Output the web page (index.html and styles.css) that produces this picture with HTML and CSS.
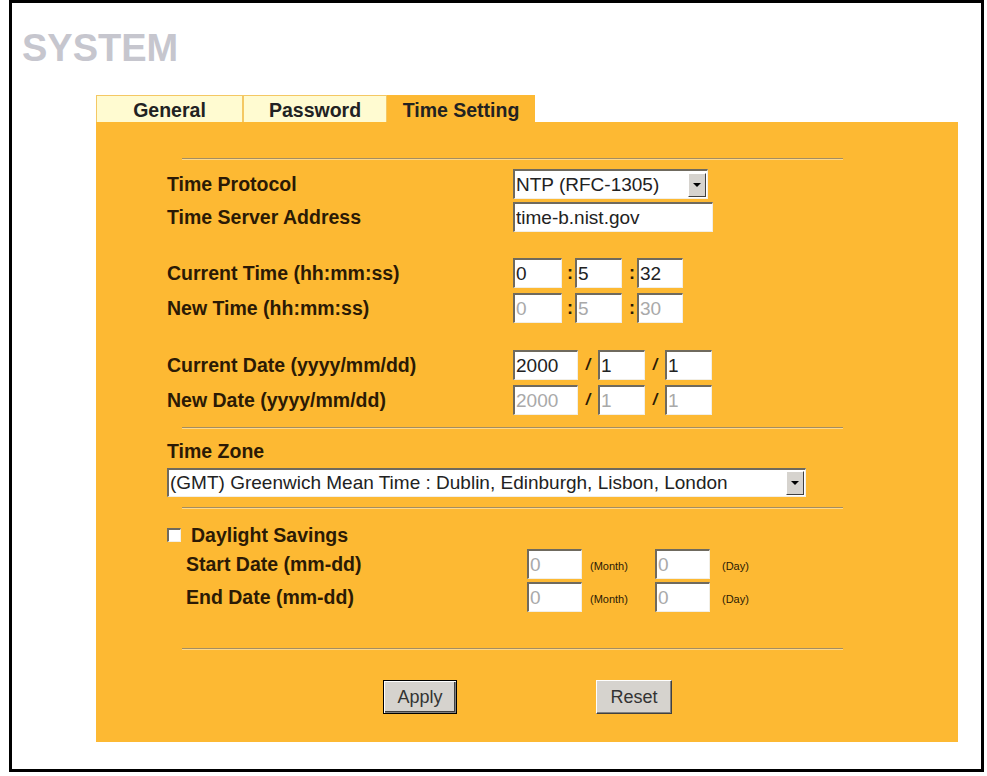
FILE: index.html
```html
<!DOCTYPE html>
<html>
<head>
<title>SYSTEM - Time Setting</title>
<link rel="stylesheet" href="styles.css">
</head>
<body>
<div class="frame">
  <h1 class="title">SYSTEM</h1>
  <div class="panel">
    <div class="tabs">
      <div class="tab tab-general">General</div>
      <div class="tab tab-password">Password</div>
      <div class="tab tab-time active">Time Setting</div>
    </div>
    <div class="panel-body">
      <div class="rule"></div>

      <div class="row row-protocol">
        <span class="label">Time Protocol</span>
        <div class="select proto">
          <span class="select-text">NTP (RFC-1305)</span>
          <span class="arrow"><i></i></span>
        </div>
      </div>
      <div class="row row-server">
        <span class="label">Time Server Address</span>
        <input class="field server" type="text" value="time-b.nist.gov">
      </div>

      <div class="row row-gap">
        <span class="label">Current Time (hh:mm:ss)</span>
        <input class="field t1" type="text" value="0">
        <span class="sep sep-colon">:</span>
        <input class="field t2" type="text" value="5">
        <span class="sep sep-colon wide">:</span>
        <input class="field t3" type="text" value="32">
      </div>
      <div class="row row-next">
        <span class="label">New Time (hh:mm:ss)</span>
        <input class="field t1 off" type="text" value="0" disabled>
        <span class="sep sep-colon">:</span>
        <input class="field t2 off" type="text" value="5" disabled>
        <span class="sep sep-colon wide">:</span>
        <input class="field t3 off" type="text" value="30" disabled>
      </div>

      <div class="row row-gap2">
        <span class="label">Current Date (yyyy/mm/dd)</span>
        <input class="field d1" type="text" value="2000">
        <span class="sep sep-slash">/</span>
        <input class="field d2" type="text" value="1">
        <span class="sep sep-slash">/</span>
        <input class="field d2" type="text" value="1">
      </div>
      <div class="row row-next">
        <span class="label">New Date (yyyy/mm/dd)</span>
        <input class="field d1 off" type="text" value="2000" disabled>
        <span class="sep sep-slash">/</span>
        <input class="field d2 off" type="text" value="1" disabled>
        <span class="sep sep-slash">/</span>
        <input class="field d2 off" type="text" value="1" disabled>
      </div>

      <div class="rule rule-2"></div>

      <div class="zone-label">Time Zone</div>
      <div class="select zone">
        <span class="select-text">(GMT) Greenwich Mean Time : Dublin, Edinburgh, Lisbon, London</span>
        <span class="arrow"><i></i></span>
      </div>

      <div class="rule rule-3"></div>

      <div class="dst">
        <span class="checkbox"></span>
        <span class="dst-label">Daylight Savings</span>
      </div>
      <div class="row row-dst">
        <span class="label sub">Start Date (mm-dd)</span>
        <input class="field md off" type="text" value="0" disabled>
        <span class="unit month">(Month)</span>
        <input class="field md off" type="text" value="0" disabled>
        <span class="unit day">(Day)</span>
      </div>
      <div class="row row-dst2">
        <span class="label sub">End Date (mm-dd)</span>
        <input class="field md off" type="text" value="0" disabled>
        <span class="unit month">(Month)</span>
        <input class="field md off" type="text" value="0" disabled>
        <span class="unit day">(Day)</span>
      </div>

      <div class="rule rule-4"></div>

      <div class="buttons">
        <button class="btn btn-apply">Apply</button>
        <button class="btn btn-reset">Reset</button>
      </div>
    </div>
  </div>
</div>
</body>
</html>
```

FILE: styles.css
```css
body {
  margin: 0;
  background-color: #fff;
  font-family: "Liberation Sans", Arial, sans-serif;
}
.frame {
  margin-left: 9px;
  width: 975px;
  height: 772px;
  box-sizing: border-box;
  border: 3px solid #000;
  overflow: hidden;
}
.title {
  margin: 26px 0 0 10px;
  font-size: 38px;
  line-height: 38px;
  font-weight: bold;
  color: #c6c6ce;
}
.panel {
  margin: 28px 0 0 84px;
  width: 862px;
}
.tabs {
  display: flex;
  height: 27px;
}
.tab {
  box-sizing: border-box;
  height: 27px;
  padding-top: 2px;
  background-color: #fffbd1;
  border: 1px solid #f4c864;
  border-bottom: none;
  font-size: 19.5px;
  font-weight: bold;
  line-height: 25px;
  text-align: center;
  color: #222;
}
.tab-general { width: 147px; }
.tab-password { width: 144px; }
.tab-time { width: 148px; }
.tab.active {
  background-color: #fdb933;
  border-color: #fdb933;
}
.panel-body {
  box-sizing: border-box;
  height: 620px;
  padding: 36px 0 0 71px;
  background-color: #fdb933;
}
.rule {
  width: 661px;
  margin-left: 15px;
  border-top: 1px solid #a38d62;
  border-bottom: 1px solid #ffd98a;
}
.rule-2 { margin-top: 12px; }
.rule-3 { margin-top: 10px; }
.rule-4 { margin-top: 36px; }
.row {
  display: flex;
  align-items: center;
  height: 30px;
}
.row-protocol { margin-top: 9px; }
.row-server { margin-top: 3px; }
.row-gap { margin-top: 26px; }
.row-gap2 { margin-top: 27px; }
.row-next { margin-top: 5px; }
.row-dst { margin-top: 4px; }
.row-dst2 { margin-top: 3px; }
.label {
  box-sizing: border-box;
  width: 346px;
  font-size: 19.5px;
  font-weight: bold;
  color: #2b1a05;
}
.label.sub {
  width: 360px;
  padding-left: 19px;
}
.field {
  box-sizing: border-box;
  height: 30px;
  margin: 0;
  padding: 0 0 0 1px;
  border-top: 2px solid #6f6a5e;
  border-left: 2px solid #6f6a5e;
  border-right: 1px solid #f2efe6;
  border-bottom: 1px solid #f2efe6;
  background-color: #fff;
  font-family: "Liberation Sans", Arial, sans-serif;
  font-size: 19px;
  color: #222;
  outline: none;
}
.field.off {
  color: #a9a9a9;
  background-color: #fff;
}
.server { width: 200px; }
.t1 { width: 49px; }
.t2 { width: 47px; }
.t3 { width: 46px; }
.d1 { width: 65px; }
.d2 { width: 47px; }
.md { width: 55px; }
.sep {
  font-size: 18px;
  font-weight: bold;
  color: #2b1a05;
}
.sep-colon {
  width: 13px;
  padding-right: 2px;
  box-sizing: border-box;
  text-align: right;
}
.sep-colon.wide { width: 15px; }
.sep-slash {
  width: 20px;
  text-align: center;
  font-size: 16px;
  font-style: italic;
}
.select {
  display: flex;
  align-items: center;
  box-sizing: border-box;
  height: 30px;
  padding-left: 1px;
  border-top: 2px solid #6f6a5e;
  border-left: 2px solid #6f6a5e;
  border-right: 1px solid #f2efe6;
  border-bottom: 1px solid #f2efe6;
  background-color: #fff;
  font-size: 19px;
  color: #222;
}
.proto { width: 195px; }
.select-text {
  white-space: nowrap;
}
.arrow {
  display: flex;
  align-items: center;
  justify-content: center;
  box-sizing: border-box;
  width: 18px;
  height: 24px;
  margin-left: auto;
  margin-right: 1px;
  background-color: #d6d3ce;
  border: 1px solid;
  border-color: #fff #404040 #404040 #fff;
}
.arrow i {
  width: 0;
  height: 0;
  border-left: 4px solid transparent;
  border-right: 4px solid transparent;
  border-top: 4px solid #000;
}
.zone-label {
  margin-top: 12px;
  height: 20px;
  line-height: 20px;
  font-size: 19.5px;
  font-weight: bold;
  color: #2b1a05;
}
.zone {
  width: 639px;
  height: 29px;
  margin-top: 7px;
}
.dst {
  display: flex;
  align-items: center;
  height: 20px;
  margin-top: 16px;
}
.checkbox {
  box-sizing: border-box;
  width: 14px;
  height: 14px;
  background-color: #fff;
  border-top: 2px solid #6f6a5e;
  border-left: 2px solid #6f6a5e;
  border-right: 1px solid #f2efe6;
  border-bottom: 1px solid #f2efe6;
}
.dst-label {
  margin-left: 10px;
  font-size: 19.5px;
  font-weight: bold;
  color: #2b1a05;
}
.unit {
  box-sizing: border-box;
  padding-top: 4px;
  font-size: 11px;
  color: #2b1a05;
}
.unit.month {
  width: 73px;
  padding-left: 8px;
}
.unit.day {
  padding-left: 12px;
}
.buttons {
  display: flex;
  margin-top: 30px;
  padding-left: 216px;
}
.btn {
  box-sizing: border-box;
  height: 34px;
  padding: 0;
  background-color: #d6d3ce;
  font-family: "Liberation Sans", Arial, sans-serif;
  font-size: 18px;
  color: #333;
}
.btn-apply {
  width: 74px;
  border: 1px solid #000;
  box-shadow: inset 1px 1px #fff, inset -1px -1px #808080, inset -2px -2px #404040;
}
.btn-reset {
  width: 76px;
  margin-left: 139px;
  border: 1px solid;
  border-color: #fff #404040 #404040 #fff;
  box-shadow: inset -1px -1px #808080;
}
```
